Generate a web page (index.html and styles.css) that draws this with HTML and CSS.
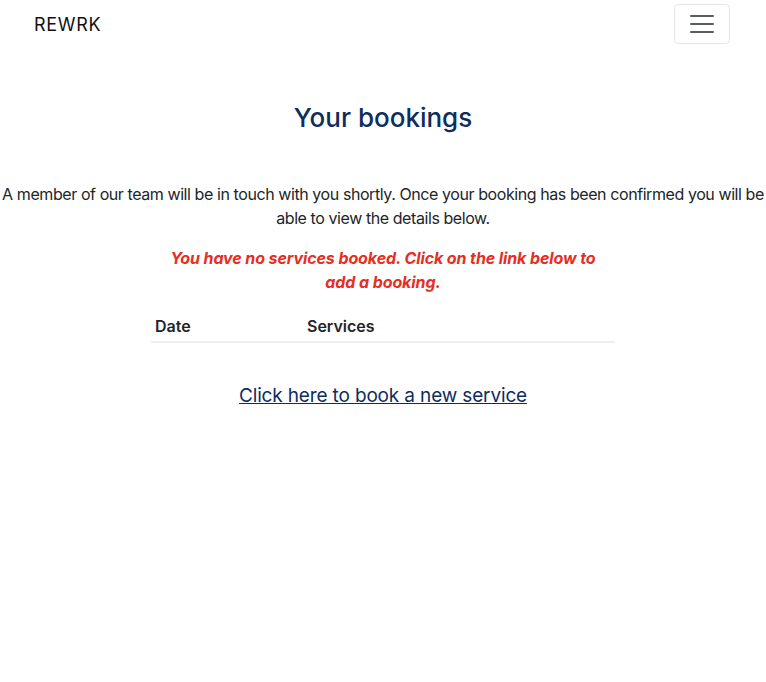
FILE: index.html
```html
<!DOCTYPE html>
<html lang="en">
<head>
<meta charset="utf-8">
<title>REWRK - Your bookings</title>
<link rel="stylesheet" href="styles.css">
</head>
<body>
<nav class="navbar">
  <a class="brand" href="#">REWRK</a>
  <button class="toggler" type="button" aria-label="Toggle navigation">
    <svg width="30" height="30" viewBox="0 0 30 30"><path stroke="rgba(33,37,41,0.75)" stroke-linecap="round" stroke-miterlimit="10" stroke-width="2" d="M4 7h22M4 15h22M4 23h22"/></svg>
  </button>
</nav>
<main class="main">
  <h1 class="title">Your bookings</h1>
  <p class="intro">A member of our team will be in touch with you shortly. Once your booking has been confirmed you will be able to view the details below.</p>
  <p class="warning">You have no services booked. Click on the link below to add a booking.</p>
  <table class="table">
    <thead>
      <tr><th class="col-date">Date</th><th class="col-services">Services</th><th></th></tr>
    </thead>
  </table>
  <a class="book-link" href="#">Click here to book a new service</a>
</main>
</body>
</html>
```

FILE: styles.css
```css
* { box-sizing: border-box; }
body {
  margin: 0;
  font-family: Inter, "Noto Sans", sans-serif;
  font-size: 16px;
  line-height: 1.5;
  color: #212529;
  background: #fff;
  overflow-x: hidden;
}
.navbar {
  display: flex;
  justify-content: space-between;
  align-items: center;
  padding: 4px 36px 4px 34px;
}
.brand {
  font-size: 18px;
  color: #111;
  text-decoration: none;
  letter-spacing: 0.7px;
}
.toggler {
  width: 56px;
  height: 40px;
  padding: 4px 12px;
  border: 1px solid rgba(0,0,0,0.1);
  border-radius: 4px;
  background: transparent;
  display: flex;
  align-items: center;
  justify-content: center;
}
.toggler svg { display: block; }
.main {
  display: flex;
  flex-direction: column;
  align-items: center;
  text-align: center;
}
.title {
  margin: 54px 0 0;
  font-size: 26px;
  font-weight: 500;
  line-height: 1.2;
  color: #0e2d5e;
}
.intro {
  margin: 49px 0 0;
  width: 766px;
  flex-shrink: 0;
  font-size: 16px;
  letter-spacing: -0.42px;
}
.warning {
  margin: 16px 0 0;
  width: 450px;
  color: #e62e22;
  font-weight: 700;
  font-style: italic;
  letter-spacing: -0.1px;
}
.table {
  margin-top: 12px;
  width: 464px;
  border-collapse: collapse;
  text-align: left;
}
.table th {
  padding: 8px 4px 3px;
  font-weight: 600;
  border-bottom: 2px solid #eeeeee;
}
.col-date { width: 152px; }
.col-services { width: 280px; }
.book-link {
  margin-top: 39px;
  font-size: 19px;
  letter-spacing: -0.15px;
  color: #0e2d5e;
  text-decoration: underline;
}
```
